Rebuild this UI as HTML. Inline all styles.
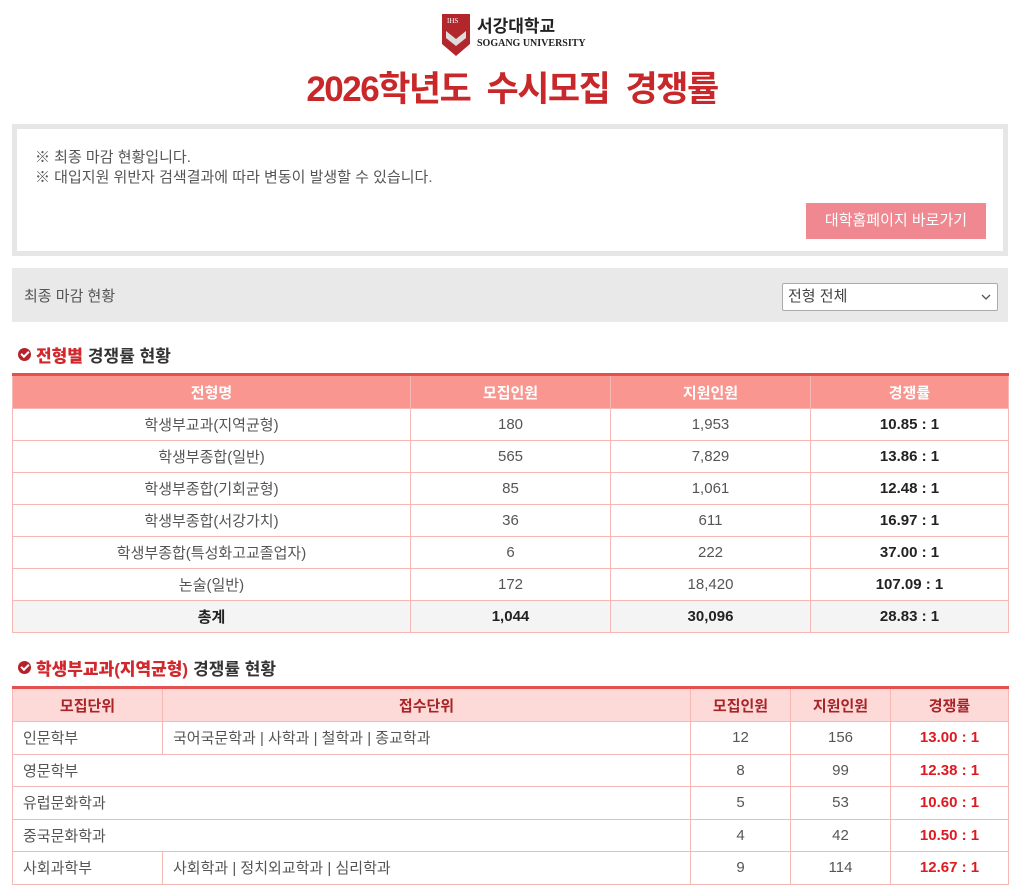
<!DOCTYPE html>
<html><head><meta charset="utf-8"><style>
body{margin:0;background:#fff;font-family:"Liberation Sans","Noto Sans CJK KR",sans-serif;color:#333;width:1024px;height:885px;overflow:hidden;position:relative}
.logo{position:absolute;left:441px;top:12px}
h1{position:absolute;left:0;width:1024px;top:61px;margin:0;text-align:center;color:#c8282a;font-size:35px;font-weight:bold;letter-spacing:-1.5px;word-spacing:8px}
.info{position:absolute;left:12px;top:124px;width:986px;height:122px;border:5px solid #e6e6e6;background:#fff;font-size:15px;color:#555}
.info p{margin:0;position:absolute;left:18px}
.btn{position:absolute;left:789px;top:74px;width:180px;height:36px;background:#ef8890;color:#fff;font-size:15px;text-align:center;line-height:36px}
.bar{position:absolute;left:12px;top:268px;width:996px;height:54px;background:#e9e9e9;font-size:15px;color:#555}
.sel{position:absolute;left:770px;top:15px;width:214px;height:26px;border:1px solid #aaa;border-radius:2px;background:#fff;line-height:26px;text-indent:5px;font-size:15px;color:#444}
.sel svg{position:absolute;right:6px;top:10px}
.h2{position:absolute;left:18px;font-size:17px;font-weight:bold;color:#333;display:flex;align-items:center}
.h2 i{display:inline-block;width:13px;height:13px;border-radius:50%;background:#b4232b;margin-right:5px;position:relative}
.h2 i:after{content:"";position:absolute;left:3px;top:3px;width:6px;height:3px;border-left:2px solid #fff;border-bottom:2px solid #fff;transform:rotate(-45deg)}
.h2 b{color:#d0282c;margin-right:5px}
table{position:absolute;left:12px;width:997px;border-collapse:collapse;font-size:15px;color:#555}
table{border-top:3px solid #e2514f}
td,th{border:1px solid #f5b8b4;text-align:center;padding:0}
.t1 th{background:#f8968f;color:#fff;font-weight:bold;height:32px}
.t1 td{height:31px}
.t1 tr.tot td{background:#f4f4f4;font-weight:bold;color:#222}
.t1 td:last-child{font-weight:bold;color:#222}
.t2 th{background:#fdd9d7;color:#a82428;font-weight:bold;height:32px}
.t2 td{height:31.5px}
.t2 td.l{text-align:left;padding-left:10px}
.t2 td.r{color:#e0191f;font-weight:bold}
</style></head><body>
<div class="logo">
<svg width="145" height="46" viewBox="0 0 145 46">
<path d="M1 2h28v30l-14 12-14-12z" fill="#b2272c"/>
<path d="M5 19l10 8 10-8v7l-10 8-10-8z" fill="#ddd"/>
<text x="6" y="11" font-size="7" fill="#fff" font-family="Liberation Serif">IHS</text>
<text x="36" y="20" font-size="17" font-weight="bold" fill="#222" font-family="Noto Sans CJK KR,sans-serif">서강대학교</text>
<text x="36" y="34" font-size="10" font-weight="bold" fill="#222" font-family="Liberation Serif,serif">SOGANG UNIVERSITY</text>
</svg></div>
<h1>2026학년도 수시모집 경쟁률</h1>
<div class="info">
<p style="top:17px">※ 최종 마감 현황입니다.</p>
<p style="top:37px">※ 대입지원 위반자 검색결과에 따라 변동이 발생할 수 있습니다.</p>
<div class="btn">대학홈페이지 바로가기</div>
</div>
<div class="bar"><span style="position:absolute;left:12px;top:17px">최종 마감 현황</span>
<div class="sel">전형 전체<svg width="10" height="6"><path d="M1 1l4 4 4-4" stroke="#555" fill="none" stroke-width="1.3"/></svg></div></div>
<div class="h2" style="top:342px"><i></i><b>전형별</b>경쟁률 현황</div>
<table class="t1" style="top:373px">
<tr><th style="width:397px">전형명</th><th style="width:199px">모집인원</th><th style="width:199px">지원인원</th><th>경쟁률</th></tr>
<tr><td>학생부교과(지역균형)</td><td>180</td><td>1,953</td><td>10.85 : 1</td></tr>
<tr><td>학생부종합(일반)</td><td>565</td><td>7,829</td><td>13.86 : 1</td></tr>
<tr><td>학생부종합(기회균형)</td><td>85</td><td>1,061</td><td>12.48 : 1</td></tr>
<tr><td>학생부종합(서강가치)</td><td>36</td><td>611</td><td>16.97 : 1</td></tr>
<tr><td>학생부종합(특성화고교졸업자)</td><td>6</td><td>222</td><td>37.00 : 1</td></tr>
<tr><td>논술(일반)</td><td>172</td><td>18,420</td><td>107.09 : 1</td></tr>
<tr class="tot"><td>총계</td><td>1,044</td><td>30,096</td><td>28.83 : 1</td></tr>
</table>
<div class="h2" style="top:655px"><i></i><b>학생부교과(지역균형)</b>경쟁률 현황</div>
<table class="t2" style="top:686px">
<tr><th style="width:149px">모집단위</th><th style="width:527px">접수단위</th><th style="width:99px">모집인원</th><th style="width:99px">지원인원</th><th>경쟁률</th></tr>
<tr><td class="l">인문학부</td><td class="l">국어국문학과 | 사학과 | 철학과 | 종교학과</td><td>12</td><td>156</td><td class="r">13.00 : 1</td></tr>
<tr><td class="l" colspan="2">영문학부</td><td>8</td><td>99</td><td class="r">12.38 : 1</td></tr>
<tr><td class="l" colspan="2">유럽문화학과</td><td>5</td><td>53</td><td class="r">10.60 : 1</td></tr>
<tr><td class="l" colspan="2">중국문화학과</td><td>4</td><td>42</td><td class="r">10.50 : 1</td></tr>
<tr><td class="l">사회과학부</td><td class="l">사회학과 | 정치외교학과 | 심리학과</td><td>9</td><td>114</td><td class="r">12.67 : 1</td></tr>
</table>
</body></html>
